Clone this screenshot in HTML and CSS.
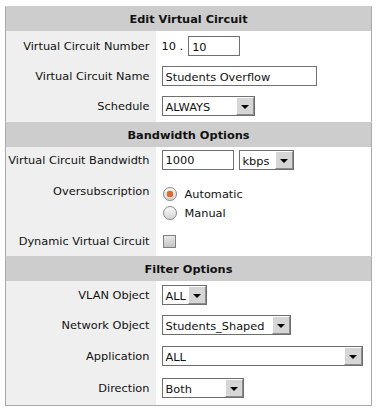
FILE: index.html
```html
<!DOCTYPE html>
<html lang="en">
<head>
  <meta charset="UTF-8">
  <title>Edit Virtual Circuit</title>
  <link rel="stylesheet" href="styles.css">
</head>
<body>
  <table class="form">
    <colgroup><col class="c-lbl"><col class="c-val"></colgroup>
    <tr class="head"><th colspan="2">Edit Virtual Circuit</th></tr>
    <tr class="r30">
      <td class="lbl">Virtual Circuit Number</td>
      <td class="val"><span class="prefix">10 .</span><input class="txt w-num" type="text" value="10"></td>
    </tr>
    <tr class="r30">
      <td class="lbl">Virtual Circuit Name</td>
      <td class="val"><input class="txt w-name" type="text" value="Students Overflow"></td>
    </tr>
    <tr class="r31">
      <td class="lbl">Schedule</td>
      <td class="val"><span class="sel w-sched"><span class="opt">ALWAYS</span><span class="arrow"></span></span></td>
    </tr>

    <tr class="head"><th colspan="2">Bandwidth Options</th></tr>
    <tr class="r26">
      <td class="lbl">Virtual Circuit Bandwidth</td>
      <td class="val"><input class="txt w-bw" type="text" value="1000"><span class="sel w-unit"><span class="opt">kbps</span><span class="arrow"></span></span></td>
    </tr>
    <tr class="r53">
      <td class="lbl top">Oversubscription</td>
      <td class="val top">
        <div class="radio-row"><span class="radio on"></span>Automatic</div>
        <div class="radio-row"><span class="radio"></span>Manual</div>
      </td>
    </tr>
    <tr class="r31">
      <td class="lbl">Dynamic Virtual Circuit</td>
      <td class="val"><span class="check"></span></td>
    </tr>

    <tr class="head"><th colspan="2">Filter Options</th></tr>
    <tr class="r28">
      <td class="lbl">VLAN Object</td>
      <td class="val"><span class="sel w-vlan"><span class="opt">ALL</span><span class="arrow"></span></span></td>
    </tr>
    <tr class="r31">
      <td class="lbl">Network Object</td>
      <td class="val"><span class="sel w-net"><span class="opt">Students_Shaped</span><span class="arrow"></span></span></td>
    </tr>
    <tr class="r31">
      <td class="lbl">Application</td>
      <td class="val"><span class="sel w-app"><span class="opt">ALL</span><span class="arrow"></span></span></td>
    </tr>
    <tr class="r34">
      <td class="lbl">Direction</td>
      <td class="val"><span class="sel w-dir"><span class="opt">Both</span><span class="arrow"></span></span></td>
    </tr>
  </table>
</body>
</html>
```

FILE: styles.css
```css
html, body { margin:0; padding:0; background:#fff; }
body { padding:6px 0 0 5px; font-family:"DejaVu Sans", Verdana, sans-serif; font-size:11.35px; color:#111; }

.form { width:366px; border-collapse:collapse; border:1px solid #a9a9a9; table-layout:fixed; }
.form td, .form th { padding:0; }
.c-lbl { width:150px; }
.c-val { width:216px; }

.head th { height:24px; background:#cdcdcd; font-weight:bold; text-align:center; border-top:1px solid #cdcdcd; }

.lbl { background:#efefef; text-align:right; padding-right:6px !important; vertical-align:middle; }
.lbl.top { vertical-align:top; padding-top:11px !important; }
.val { padding-left:6px !important; vertical-align:middle; white-space:nowrap; }
.val.top { vertical-align:top; padding-top:12px !important; }

.r26 { height:26px; }
.r28 { height:28px; }
.r30 { height:30px; }
.r31 { height:31px; }
.r34 { height:34px; }
.r53 { height:53px; }

.prefix { display:inline-block; margin-right:5px; vertical-align:middle; }

.txt { box-sizing:border-box; height:20px; border:1px solid #707070; padding:1px 3px 0; font:inherit; color:#111; background:#fff; vertical-align:middle; margin:0; }
.w-num { width:52px; }
.w-name { width:155px; }
.w-bw { width:72px; margin-right:5px; }

.sel { box-sizing:border-box; display:inline-flex; align-items:stretch; height:20px; border:1px solid #6e6e6e; background:#fff; vertical-align:middle; }
.sel .opt { flex:1; padding:3px 0 0 3px; }
.sel .arrow { position:relative; width:16px; background:#d6d6d6; border-left:1px solid #fff; border-top:1px solid #fff; border-right:1px solid #8c8c8c; border-bottom:1px solid #8c8c8c; }
.sel .arrow::after { content:""; position:absolute; left:4px; top:7px; border-left:4px solid transparent; border-right:4px solid transparent; border-top:4px solid #000; }
.w-sched { width:93px; }
.w-unit { width:55px; }
.w-vlan { width:45px; }
.w-net { width:129px; }
.w-app { width:201px; }
.w-dir { width:82px; }

.radio-row { display:flex; align-items:center; height:19px; }
.radio { box-sizing:border-box; width:14px; height:14px; border-radius:50%; border:1px solid #8a8a8a; background:linear-gradient(#fafafa, #d4d4d4); margin:0 8px 0 1px; position:relative; }
.radio.on::after { content:""; position:absolute; left:3px; top:3px; width:6px; height:6px; border-radius:50%; background:#e06a27; box-shadow:0 0 1px #b04510; }

.check { box-sizing:border-box; display:inline-block; width:13px; height:13px; border:1px solid #808080; background:linear-gradient(#e8e8e8, #c4c4c4); vertical-align:middle; margin-left:1px; }
```
